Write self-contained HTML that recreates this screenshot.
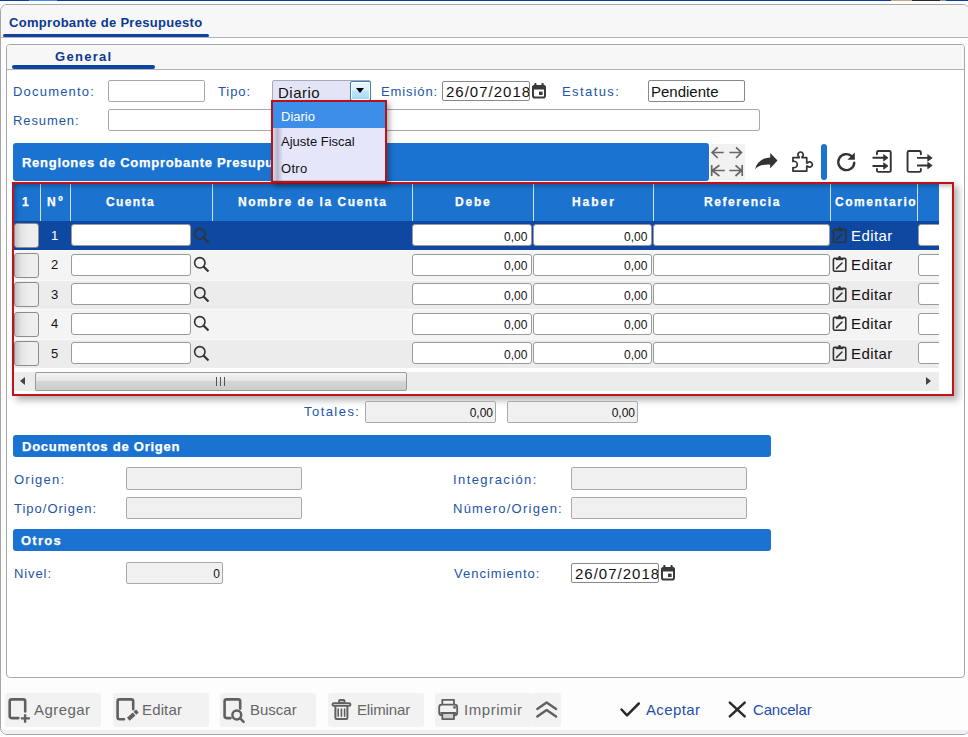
<!DOCTYPE html>
<html><head><meta charset="utf-8">
<style>
*{box-sizing:border-box;margin:0;padding:0}
html,body{width:968px;height:737px;overflow:hidden;background:#fff;font-family:"Liberation Sans",sans-serif;position:relative}
.a{position:absolute}
.t{position:absolute;white-space:nowrap;line-height:14px}
.lb{color:#2255a8;font-size:13px;letter-spacing:0.9px}
.inp{position:absolute;background:#fff;border:1px solid #a9a9a9;border-radius:2px}
.dis{background:#f0f0f0}
.sec{position:absolute;background:#1a73d0;border-radius:3px;height:22px}
.sect{position:absolute;color:#fff;font-weight:bold;font-size:13px;letter-spacing:0.5px;white-space:nowrap;line-height:14px;-webkit-text-stroke:0.25px #fff}
.hd{position:absolute;color:#fff;font-weight:bold;font-size:12px;letter-spacing:1.55px;white-space:nowrap;line-height:14px;top:195px;-webkit-text-stroke:0.25px #fff}
.sep{position:absolute;top:184px;width:1px;height:37px;background:#cfe0f3}
.row{position:absolute;left:14px;width:925px;height:30px}
.cb{position:absolute;left:0;width:25px;height:24px;border:1px solid #8c8c8c;border-radius:3px;background:linear-gradient(90deg,#c4c4c4 0%,#e4e4e4 28%,#eeeeee 60%,#eeeeee 100%)}
.num{position:absolute;left:38px;font-size:13px;line-height:14px;color:#222}
.ci{position:absolute;background:#fff;border:1px solid #9a9a9a;border-radius:3px;height:23px}
.val{position:absolute;right:2px;font-size:12px;line-height:14px;color:#111;letter-spacing:0px}
.btn{position:absolute;top:693px;height:34px;background:#f2f2f2;border-radius:3px}
.bt{position:absolute;color:#666;font-size:15px;line-height:16px;white-space:nowrap;top:702px}
</style></head><body>
<!-- top strip -->
<div class="a" style="left:0;top:0;width:968px;height:1px;background:#0b3a9c"></div>
<div class="a" style="left:29px;top:0;width:28px;height:1px;background:#3b8ff0"></div>
<div class="a" style="left:891px;top:0;width:21px;height:1px;background:#c9a684"></div>
<div class="a" style="left:912px;top:0;width:28px;height:1px;background:#2a2a28"></div>
<div class="a" style="left:940px;top:0;width:6px;height:1px;background:#8a9a88"></div>

<!-- outer panel -->
<div class="a" style="left:0;top:4px;width:970px;height:731px;border:1px solid #a6a6a6;border-radius:7px;background:#fdfdfd;overflow:hidden">
  <div class="a" style="left:0;top:0;width:976px;height:33px;background:#f7f7f7;border-bottom:1px solid #b4b4b4"></div>
  <div class="a" style="left:0;top:725px;width:976px;height:5px;background:#eef2f6"></div>
</div>
<div class="t" style="left:9px;top:16px;font-size:13px;font-weight:bold;color:#0b3993;letter-spacing:0.3px">Comprobante de Presupuesto</div>
<div class="a" style="left:3px;top:34px;width:206px;height:3px;background:#0d44a3;border-radius:1.5px"></div>

<!-- inner panel -->
<div class="a" style="left:6px;top:44px;width:959px;height:634px;border:1px solid #a8a8a8;border-radius:4px;background:#fff;overflow:hidden">
  <div class="a" style="left:0;top:0;width:959px;height:25px;background:#f7f7f7;border-bottom:1px solid #b4b4b4"></div>
</div>
<div class="t" style="left:55px;top:50px;font-size:13px;font-weight:bold;color:#0b3993;letter-spacing:1.3px">General</div>
<div class="a" style="left:12px;top:65px;width:143px;height:4px;background:#0d44a3;border-radius:2px"></div>

<!-- form row 1 -->
<div class="t lb" style="left:13px;top:85px;letter-spacing:1.2px">Documento:</div>
<div class="inp" style="left:108px;top:80px;width:97px;height:22px"></div>
<div class="t lb" style="left:218px;top:85px">Tipo:</div>
<div class="a" style="left:272px;top:80px;width:99px;height:22px;background:#e4e4f7;border:1px solid #a8a8b8;border-radius:2px"></div>
<div class="a" style="left:350px;top:81px;width:21px;height:20px;background:linear-gradient(#eaf6fd 0%,#d9f0fc 45%,#bee6fd 50%,#a7d9f5 100%);border:1px solid #3c7fb1;border-radius:2px;box-shadow:inset 0 0 0 1px #fff"></div>
<div class="a" style="left:356px;top:88px;width:0;height:0;border-left:4.5px solid transparent;border-right:4.5px solid transparent;border-top:5px solid #000"></div>
<div class="t" style="left:278px;top:86px;font-size:15px;color:#111;letter-spacing:0.5px">Diario</div>
<div class="t lb" style="left:381px;top:85px">Emisión:</div>
<div class="inp" style="left:442px;top:81px;width:88px;height:20px;overflow:hidden;border-color:#888"><div class="t" style="left:3px;top:3px;font-size:15px;color:#111;letter-spacing:1.0px">26/07/2018</div></div>
<svg class="a" style="left:532px;top:83px" width="15" height="16" viewBox="0 0 15 16"><rect x="1" y="3" width="12" height="11.5" rx="1.8" fill="none" stroke="#3a3a3a" stroke-width="2"/><rect x="0.2" y="2.3" width="13.6" height="4.2" rx="1.5" fill="#3a3a3a"/><rect x="2.3" y="0" width="2.2" height="3" rx="0.8" fill="#3a3a3a"/><rect x="9.5" y="0" width="2.2" height="3" rx="0.8" fill="#3a3a3a"/><rect x="7" y="8.6" width="3.6" height="3.4" fill="#3a3a3a"/></svg>
<div class="t lb" style="left:562px;top:85px;letter-spacing:1.42px">Estatus:</div>
<div class="inp" style="left:648px;top:80px;width:97px;height:22px;border-color:#888"><div class="t" style="left:2px;top:4px;font-size:15px;color:#111">Pendiente</div></div>
<!-- row 2 -->
<div class="t lb" style="left:13px;top:114px">Resumen:</div>
<div class="inp" style="left:108px;top:109px;width:652px;height:22px"></div>

<!-- table header bar -->
<div class="a" style="left:13px;top:143px;width:696px;height:38px;background:#1a73d0;border-radius:3px"></div>
<div class="t" style="left:22px;top:156px;font-size:13px;font-weight:bold;color:#fff;letter-spacing:0.72px;-webkit-text-stroke:0.25px #fff">Renglones de Comprobante Presupuesto</div>
<!-- tool buttons -->
<div class="a" style="left:710px;top:144px;width:35px;height:36px;background:#f2f2f2;border-radius:2px"></div>
<svg class="a" style="left:706px;top:142px" width="44" height="42" viewBox="0 0 44 42" fill="none" stroke="#666" stroke-width="1.7">
<path d="M6 10.5H17.7M11.7 5.4L6.2 10.5L11.7 16"/><path d="M23.4 10.5H35.5M30 5.4L35.4 10.5L30 16"/>
<path d="M5.7 23V34M6 28.5H18.8M13.4 23.3L6.2 28.5L13.4 34"/><path d="M23.4 28.5H35.5M29.5 23.3L35.6 28.5L29.5 34M36.2 23V34"/>
</svg>
<svg class="a" style="left:750px;top:146px" width="70" height="32" viewBox="0 0 70 32">
<path d="M20.2 11.6V6.9L27.5 14.5L20.2 22.4V18.4C13 18.2 8.5 19.6 5 23.2C7 16 12 12 20.2 11.6Z" fill="#333"/>
<path d="M42.95 11.65H49.1V11A2.7 2.7 0 1 1 52 11V11.65H56.75V17H57.5A2.65 2.65 0 1 1 57.5 20H56.75V25.05H42.95V21.5A3.22 3.22 0 1 0 42.95 15.5Z" fill="none" stroke="#333" stroke-width="1.7" stroke-linejoin="round"/>
</svg>
<div class="a" style="left:821px;top:144px;width:6px;height:36px;background:#1a73d0;border-radius:3px"></div>
<svg class="a" style="left:830px;top:146px" width="32" height="32" viewBox="0 0 32 32">
<path d="M24.27 16.8A8 8 0 1 1 21.65 10.15" fill="none" stroke="#333" stroke-width="2.4" stroke-linecap="round"/>
<path d="M17.4 13.7L24.8 6.5V13.7Z" fill="#333"/>
</svg>
<svg class="a" style="left:866px;top:146px" width="72" height="32" viewBox="0 0 72 32" fill="none" stroke="#333" stroke-width="1.9" stroke-linecap="round" stroke-linejoin="round">
<path d="M10.95 8.2V6.5Q10.95 5 12.5 5H23.2Q24.75 5 24.75 6.5V24.4Q24.75 25.9 23.2 25.9H12.5Q10.95 25.9 10.95 24.4V23"/>
<path d="M6.5 11.8H18.5M6.5 20H18.5" stroke-linecap="butt"/>
<path d="M17.9 8.8L22 11.8L17.9 14.8ZM17.9 17L22 20L17.9 23Z" fill="#333" stroke-width="0.8"/>
<path d="M54.85 8.2V6.5Q54.85 5 53.3 5H43.1Q41.55 5 41.55 6.5V24.4Q41.55 25.9 43.1 25.9H53.3Q54.85 25.9 54.85 24.4V23"/>
<path d="M51 11.9H62.5M51 19.5H62.5" stroke-linecap="butt"/>
<path d="M62 8.9L66.2 11.9L62 14.9ZM62 16.5L66.2 19.5L62 22.5Z" fill="#333" stroke-width="0.8"/>
</svg>

<!-- table -->
<div class="a" style="left:12px;top:182px;width:942px;height:214px;border:2px solid #c1121c;box-shadow:4px 4px 7px rgba(0,0,0,0.32);background:#fff"></div>
<div class="a" style="left:14px;top:184px;width:925px;height:37px;background:#1b73cf"></div>

<div class="sep" style="left:40px"></div><div class="sep" style="left:70px"></div><div class="sep" style="left:212px"></div><div class="sep" style="left:412px"></div><div class="sep" style="left:533px"></div><div class="sep" style="left:653px"></div><div class="sep" style="left:830px"></div><div class="sep" style="left:917px"></div>
<div class="hd" style="left:22px">1</div>
<div class="hd" style="left:47px;letter-spacing:2.5px">Nº</div>
<div class="hd" style="left:106px;letter-spacing:1.38px">Cuenta</div>
<div class="hd" style="left:238px">Nombre de la Cuenta</div>
<div class="hd" style="left:455px;letter-spacing:1.77px">Debe</div>
<div class="hd" style="left:572px;letter-spacing:1.95px">Haber</div>
<div class="hd" style="left:704px">Referencia</div>
<div class="hd" style="left:835px">Comentario</div>
<div class="a" style="left:917px;top:184px;width:22px;height:37px;background:#1b73cf"></div>
<div class="sep" style="left:917px"></div>

<div class="a" style="left:14px;top:184px;width:938px;height:37px;box-shadow:inset 0 5px 5px -3px rgba(0,0,0,0.28)"></div>
<div class="a" style="left:14px;top:184px;width:26px;height:37px;box-shadow:inset 5px 0 5px -3px rgba(0,0,0,0.25)"></div>

<div class="a" style="left:14px;top:221px;width:925px;height:29px;background:#0e48a0"></div>
<div class="cb" style="left:14px;top:223px;height:25px"></div>
<div class="t" style="left:51px;top:229px;font-size:13px;color:#fff">1</div>
<div class="ci" style="left:71px;top:224px;width:120px;height:22px"></div>
<div class="ci" style="left:412px;top:224px;width:120px;height:22px"></div>
<div class="ci" style="left:533px;top:224px;width:119px;height:22px"></div>
<div class="ci" style="left:653px;top:224px;width:177px;height:22px"></div>
<div class="ci" style="left:918px;top:224px;width:30px;height:22px"></div>
<div class="t val" style="left:504px;top:230px">0,00</div>
<div class="t val" style="left:624px;top:230px">0,00</div>
<svg class="a" style="left:193px;top:227px" width="18" height="18" viewBox="0 0 18 18" fill="none" stroke="#333" stroke-width="1.6"><circle cx="6.8" cy="6.8" r="5.2"/><path d="M10.5 10.5L15.5 15.5" stroke-width="2.2"/></svg>
<svg class="a" style="left:832px;top:226px" width="16" height="18" viewBox="0 0 16 18" fill="none" stroke="#333" stroke-width="1.6" stroke-linejoin="round"><path d="M4.3 3.4H2.6Q1.4 3.4 1.4 4.6V15.1Q1.4 16.3 2.6 16.3H12.6Q13.8 16.3 13.8 15.1V4.6Q13.8 3.4 12.6 3.4H10.9"/><path d="M3.9 2.6H11.2V5.2H3.9Z" fill="#333" stroke="none"/><circle cx="7.55" cy="2.4" r="1.35" fill="#333" stroke="none"/><path d="M4.6 13.4L10 8" stroke-width="1.5" stroke-linecap="round"/></svg>
<div class="t" style="left:851px;top:229px;font-size:15px;letter-spacing:0.4px;color:#fff">Editar</div>
<div class="a" style="left:14px;top:250px;width:925px;height:30px;background:#f4f4f4"></div>
<div class="a" style="left:14px;top:250px;width:925px;height:1px;background:#fafafa"></div>
<div class="cb" style="left:14px;top:253px;height:25px"></div>
<div class="t" style="left:51px;top:258px;font-size:13px;color:#111">2</div>
<div class="ci" style="left:71px;top:254px;width:120px;height:22px"></div>
<div class="ci" style="left:412px;top:254px;width:120px;height:22px"></div>
<div class="ci" style="left:533px;top:254px;width:119px;height:22px"></div>
<div class="ci" style="left:653px;top:254px;width:177px;height:22px"></div>
<div class="ci" style="left:918px;top:254px;width:30px;height:22px"></div>
<div class="t val" style="left:504px;top:259px">0,00</div>
<div class="t val" style="left:624px;top:259px">0,00</div>
<svg class="a" style="left:193px;top:256px" width="18" height="18" viewBox="0 0 18 18" fill="none" stroke="#333" stroke-width="1.6"><circle cx="6.8" cy="6.8" r="5.2"/><path d="M10.5 10.5L15.5 15.5" stroke-width="2.2"/></svg>
<svg class="a" style="left:832px;top:255px" width="16" height="18" viewBox="0 0 16 18" fill="none" stroke="#333" stroke-width="1.6" stroke-linejoin="round"><path d="M4.3 3.4H2.6Q1.4 3.4 1.4 4.6V15.1Q1.4 16.3 2.6 16.3H12.6Q13.8 16.3 13.8 15.1V4.6Q13.8 3.4 12.6 3.4H10.9"/><path d="M3.9 2.6H11.2V5.2H3.9Z" fill="#333" stroke="none"/><circle cx="7.55" cy="2.4" r="1.35" fill="#333" stroke="none"/><path d="M4.6 13.4L10 8" stroke-width="1.5" stroke-linecap="round"/></svg>
<div class="t" style="left:851px;top:258px;font-size:15px;letter-spacing:0.4px;color:#111">Editar</div>
<div class="a" style="left:14px;top:280px;width:925px;height:29px;background:#ececec"></div>
<div class="a" style="left:14px;top:280px;width:925px;height:1px;background:#fafafa"></div>
<div class="cb" style="left:14px;top:282px;height:25px"></div>
<div class="t" style="left:51px;top:288px;font-size:13px;color:#111">3</div>
<div class="ci" style="left:71px;top:283px;width:120px;height:22px"></div>
<div class="ci" style="left:412px;top:283px;width:120px;height:22px"></div>
<div class="ci" style="left:533px;top:283px;width:119px;height:22px"></div>
<div class="ci" style="left:653px;top:283px;width:177px;height:22px"></div>
<div class="ci" style="left:918px;top:283px;width:30px;height:22px"></div>
<div class="t val" style="left:504px;top:289px">0,00</div>
<div class="t val" style="left:624px;top:289px">0,00</div>
<svg class="a" style="left:193px;top:286px" width="18" height="18" viewBox="0 0 18 18" fill="none" stroke="#333" stroke-width="1.6"><circle cx="6.8" cy="6.8" r="5.2"/><path d="M10.5 10.5L15.5 15.5" stroke-width="2.2"/></svg>
<svg class="a" style="left:832px;top:285px" width="16" height="18" viewBox="0 0 16 18" fill="none" stroke="#333" stroke-width="1.6" stroke-linejoin="round"><path d="M4.3 3.4H2.6Q1.4 3.4 1.4 4.6V15.1Q1.4 16.3 2.6 16.3H12.6Q13.8 16.3 13.8 15.1V4.6Q13.8 3.4 12.6 3.4H10.9"/><path d="M3.9 2.6H11.2V5.2H3.9Z" fill="#333" stroke="none"/><circle cx="7.55" cy="2.4" r="1.35" fill="#333" stroke="none"/><path d="M4.6 13.4L10 8" stroke-width="1.5" stroke-linecap="round"/></svg>
<div class="t" style="left:851px;top:288px;font-size:15px;letter-spacing:0.4px;color:#111">Editar</div>
<div class="a" style="left:14px;top:309px;width:925px;height:30px;background:#f4f4f4"></div>
<div class="a" style="left:14px;top:309px;width:925px;height:1px;background:#fafafa"></div>
<div class="cb" style="left:14px;top:312px;height:25px"></div>
<div class="t" style="left:51px;top:317px;font-size:13px;color:#111">4</div>
<div class="ci" style="left:71px;top:313px;width:120px;height:22px"></div>
<div class="ci" style="left:412px;top:313px;width:120px;height:22px"></div>
<div class="ci" style="left:533px;top:313px;width:119px;height:22px"></div>
<div class="ci" style="left:653px;top:313px;width:177px;height:22px"></div>
<div class="ci" style="left:918px;top:313px;width:30px;height:22px"></div>
<div class="t val" style="left:504px;top:318px">0,00</div>
<div class="t val" style="left:624px;top:318px">0,00</div>
<svg class="a" style="left:193px;top:315px" width="18" height="18" viewBox="0 0 18 18" fill="none" stroke="#333" stroke-width="1.6"><circle cx="6.8" cy="6.8" r="5.2"/><path d="M10.5 10.5L15.5 15.5" stroke-width="2.2"/></svg>
<svg class="a" style="left:832px;top:314px" width="16" height="18" viewBox="0 0 16 18" fill="none" stroke="#333" stroke-width="1.6" stroke-linejoin="round"><path d="M4.3 3.4H2.6Q1.4 3.4 1.4 4.6V15.1Q1.4 16.3 2.6 16.3H12.6Q13.8 16.3 13.8 15.1V4.6Q13.8 3.4 12.6 3.4H10.9"/><path d="M3.9 2.6H11.2V5.2H3.9Z" fill="#333" stroke="none"/><circle cx="7.55" cy="2.4" r="1.35" fill="#333" stroke="none"/><path d="M4.6 13.4L10 8" stroke-width="1.5" stroke-linecap="round"/></svg>
<div class="t" style="left:851px;top:317px;font-size:15px;letter-spacing:0.4px;color:#111">Editar</div>
<div class="a" style="left:14px;top:339px;width:925px;height:29px;background:#ececec"></div>
<div class="a" style="left:14px;top:339px;width:925px;height:1px;background:#fafafa"></div>
<div class="cb" style="left:14px;top:341px;height:25px"></div>
<div class="t" style="left:51px;top:347px;font-size:13px;color:#111">5</div>
<div class="ci" style="left:71px;top:342px;width:120px;height:22px"></div>
<div class="ci" style="left:412px;top:342px;width:120px;height:22px"></div>
<div class="ci" style="left:533px;top:342px;width:119px;height:22px"></div>
<div class="ci" style="left:653px;top:342px;width:177px;height:22px"></div>
<div class="ci" style="left:918px;top:342px;width:30px;height:22px"></div>
<div class="t val" style="left:504px;top:348px">0,00</div>
<div class="t val" style="left:624px;top:348px">0,00</div>
<svg class="a" style="left:193px;top:345px" width="18" height="18" viewBox="0 0 18 18" fill="none" stroke="#333" stroke-width="1.6"><circle cx="6.8" cy="6.8" r="5.2"/><path d="M10.5 10.5L15.5 15.5" stroke-width="2.2"/></svg>
<svg class="a" style="left:832px;top:344px" width="16" height="18" viewBox="0 0 16 18" fill="none" stroke="#333" stroke-width="1.6" stroke-linejoin="round"><path d="M4.3 3.4H2.6Q1.4 3.4 1.4 4.6V15.1Q1.4 16.3 2.6 16.3H12.6Q13.8 16.3 13.8 15.1V4.6Q13.8 3.4 12.6 3.4H10.9"/><path d="M3.9 2.6H11.2V5.2H3.9Z" fill="#333" stroke="none"/><circle cx="7.55" cy="2.4" r="1.35" fill="#333" stroke="none"/><path d="M4.6 13.4L10 8" stroke-width="1.5" stroke-linecap="round"/></svg>
<div class="t" style="left:851px;top:347px;font-size:15px;letter-spacing:0.4px;color:#111">Editar</div>
<div class="a" style="left:939px;top:221px;width:13px;height:147px;background:#fff"></div>


<!-- scrollbar -->
<div class="a" style="left:14px;top:372px;width:925px;height:19px;background:#ececec"></div>
<div class="a" style="left:20px;top:377px;width:0;height:0;border-top:4.5px solid transparent;border-bottom:4.5px solid transparent;border-right:5px solid #444"></div>
<div class="a" style="left:926px;top:377px;width:0;height:0;border-top:4.5px solid transparent;border-bottom:4.5px solid transparent;border-left:5px solid #444"></div>
<div class="a" style="left:35px;top:372px;width:372px;height:19px;border:1px solid #9a9a9a;border-radius:2px;background:linear-gradient(#f3f3f3 0%,#e6e6e6 45%,#d6d6d6 50%,#cdcdcd 100%)"></div>
<div class="a" style="left:216px;top:377px;width:1px;height:9px;background:#555"></div>
<div class="a" style="left:220px;top:377px;width:1px;height:9px;background:#555"></div>
<div class="a" style="left:224px;top:377px;width:1px;height:9px;background:#555"></div>

<!-- totals -->
<div class="t lb" style="left:304px;top:405px;letter-spacing:1.45px">Totales:</div>
<div class="inp dis" style="left:365px;top:401px;width:131px;height:22px"><div class="val" style="top:4px">0,00</div></div>
<div class="inp dis" style="left:507px;top:401px;width:131px;height:22px"><div class="val" style="top:4px">0,00</div></div>

<!-- Documentos de Origen -->
<div class="sec" style="left:13px;top:435px;width:758px"></div>
<div class="sect" style="left:22px;top:440px;letter-spacing:0.76px">Documentos de Origen</div>
<div class="t lb" style="left:14px;top:473px;letter-spacing:1.23px">Origen:</div>
<div class="inp dis" style="left:126px;top:467px;width:176px;height:23px"></div>
<div class="t lb" style="left:14px;top:502px;letter-spacing:1.0px">Tipo/Origen:</div>
<div class="inp dis" style="left:126px;top:497px;width:176px;height:22px"></div>
<div class="t lb" style="left:453px;top:473px;letter-spacing:1.4px">Integración:</div>
<div class="inp dis" style="left:571px;top:467px;width:176px;height:23px"></div>
<div class="t lb" style="left:453px;top:502px;letter-spacing:1.25px">Número/Origen:</div>
<div class="inp dis" style="left:571px;top:497px;width:176px;height:22px"></div>

<!-- Otros -->
<div class="sec" style="left:13px;top:529px;width:758px"></div>
<div class="sect" style="left:21px;top:534px;letter-spacing:1.25px">Otros</div>
<div class="t lb" style="left:14px;top:567px">Nivel:</div>
<div class="inp dis" style="left:126px;top:562px;width:97px;height:22px"><div class="val" style="top:4px">0</div></div>
<div class="t lb" style="left:454px;top:567px;letter-spacing:1.0px">Vencimiento:</div>
<div class="inp" style="left:571px;top:563px;width:88px;height:20px;overflow:hidden;border-color:#888"><div class="t" style="left:3px;top:3px;font-size:15px;color:#111;letter-spacing:1.0px">26/07/2018</div></div>
<svg class="a" style="left:661px;top:565px" width="15" height="16" viewBox="0 0 15 16"><rect x="1" y="3" width="12" height="11.5" rx="1.8" fill="none" stroke="#3a3a3a" stroke-width="2"/><rect x="0.2" y="2.3" width="13.6" height="4.2" rx="1.5" fill="#3a3a3a"/><rect x="2.3" y="0" width="2.2" height="3" rx="0.8" fill="#3a3a3a"/><rect x="9.5" y="0" width="2.2" height="3" rx="0.8" fill="#3a3a3a"/><rect x="7" y="8.6" width="3.6" height="3.4" fill="#3a3a3a"/></svg>

<!-- bottom buttons -->

<div class="btn" style="left:5px;width:96px"></div>
<div class="btn" style="left:113px;width:96px"></div>
<div class="btn" style="left:220px;width:96px"></div>
<div class="btn" style="left:328px;width:96px"></div>
<div class="btn" style="left:435px;width:96px"></div>
<div class="btn" style="left:531px;width:30px"></div>
<div class="bt" style="left:34px;letter-spacing:0.43px;color:#666">Agregar</div>
<div class="bt" style="left:142px;letter-spacing:0.14px;color:#666">Editar</div>
<div class="bt" style="left:250px;letter-spacing:0px;color:#666">Buscar</div>
<div class="bt" style="left:357px;letter-spacing:-0.14px;color:#666">Eliminar</div>
<div class="bt" style="left:464px;letter-spacing:0.55px;color:#666">Imprimir</div>
<div class="bt" style="left:646px;letter-spacing:0.37px;color:#1f4fa8">Aceptar</div>
<div class="bt" style="left:753px;letter-spacing:-0.2px;color:#1f4fa8">Cancelar</div>
<svg class="a" style="left:4px;top:692px" width="36" height="36" viewBox="0 0 36 36" fill="none" stroke="#606060" stroke-linecap="round" stroke-linejoin="round" stroke-width="2.6"><path d="M14.4 26.1H7.7Q5.7 26.1 5.7 24.1V9.4Q5.7 7.4 7.7 7.4H19.2Q21.2 7.4 21.2 9.4V19.5"/><path d="M21.1 22.2V30.8M16.9 26.4H25.9" stroke-width="2.4" stroke-linecap="butt"/></svg>
<svg class="a" style="left:112px;top:692px" width="36" height="36" viewBox="0 0 36 36" fill="none" stroke="#606060" stroke-linecap="round" stroke-linejoin="round" stroke-width="2.6"><path d="M12 27.3H7.6Q5.6 27.3 5.6 25.3V9.4Q5.6 7.4 7.6 7.4H19.2Q21.2 7.4 21.2 9.4V17.3"/><path d="M16.3 27.3L22.1 22" stroke-width="4" stroke-linecap="butt"/><path d="M22.9 21.2L25.4 19" stroke-width="4" stroke-linecap="butt"/></svg>
<svg class="a" style="left:219px;top:692px" width="36" height="36" viewBox="0 0 36 36" fill="none" stroke="#606060" stroke-linecap="round" stroke-linejoin="round" stroke-width="2.6"><path d="M11.5 26.1H7.6Q5.6 26.1 5.6 24.1V9.4Q5.6 7.4 7.6 7.4H19.2Q21.2 7.4 21.2 9.4V16.6"/><circle cx="17.8" cy="23" r="4.4" stroke-width="2.5"/><path d="M21 26.2L24.6 29.8" stroke-width="2.5"/></svg>
<svg class="a" style="left:327px;top:692px" width="36" height="36" viewBox="0 0 36 36" fill="none" stroke="#606060" stroke-linecap="round" stroke-linejoin="round" stroke-width="1.9"><rect x="5.5" y="11.2" width="18" height="2.7" rx="1.35"/><rect x="12" y="8" width="5.6" height="2.6" rx="1" stroke-width="1.8"/><path d="M8.4 15V25.8Q8.4 27 9.6 27H19.2Q20.4 27 20.4 25.8V15" stroke-width="2"/><path d="M11.2 17V24.3M14.4 17V24.3M17.6 17V24.3" stroke-width="1.6"/></svg>
<svg class="a" style="left:434px;top:692px" width="36" height="36" viewBox="0 0 36 36" fill="none" stroke="#606060" stroke-linecap="round" stroke-linejoin="round" stroke-width="1.8"><rect x="8.3" y="21" width="11.7" height="6.1" fill="#d0d0d0"/><path d="M8.3 12V7.8H20V12"/><path d="M8 23.2H7.7Q5.2 23.2 5.2 20.7V15.2Q5.2 12.7 7.7 12.7H20.7Q23.2 12.7 23.2 15.2V20.7Q23.2 23.2 20.7 23.2H20.3"/><path d="M7 21H21.5"/><circle cx="20.5" cy="15.4" r="0.5" fill="#606060"/></svg>
<svg class="a" style="left:528px;top:692px" width="36" height="36" viewBox="0 0 36 36" fill="none" stroke="#606060" stroke-linecap="round" stroke-linejoin="round" stroke-width="2.4"><path d="M9.3 16.9L18.6 10.4L28.1 16.9M9.3 24.6L18.6 18.1L28.1 24.6"/></svg>
<svg class="a" style="left:616px;top:698px" width="28" height="24" viewBox="0 0 28 24" fill="none" stroke="#2a2a2a" stroke-width="2.5" stroke-linecap="round" stroke-linejoin="round"><path d="M5.5 11.5L11 17.3L22.8 5.5"/></svg>
<svg class="a" style="left:725px;top:698px" width="24" height="24" viewBox="0 0 24 24" fill="none" stroke="#2a2a2a" stroke-width="2.5" stroke-linecap="round"><path d="M4.8 4.6L19.7 18.3M19.7 4.6L4.8 18.3"/></svg>


<!-- dropdown -->
<div class="a" style="left:271px;top:100px;width:116px;height:83px;border:2px solid #b7121b;background:#e6e6fa;box-shadow:3px 3px 5px rgba(0,0,0,0.3)"></div>
<div class="a" style="left:273px;top:102px;width:112px;height:26px;background:#3d8ee8"></div>
<div class="a" style="left:273px;top:128px;width:10px;height:53px;background:linear-gradient(90deg,rgba(200,202,225,0.6) 0%,rgba(175,178,200,0.9) 45%,rgba(230,230,250,0) 100%)"></div>
<div class="a" style="left:273px;top:180px;width:112px;height:1px;background:rgba(120,125,140,0.35)"></div>
<div class="t" style="left:281px;top:110px;font-size:13px;color:#fff">Diario</div>
<div class="t" style="left:281px;top:135px;font-size:13px;color:#111">Ajuste Fiscal</div>
<div class="t" style="left:281px;top:162px;font-size:13px;color:#111;letter-spacing:0.3px">Otro</div>
</body></html>
